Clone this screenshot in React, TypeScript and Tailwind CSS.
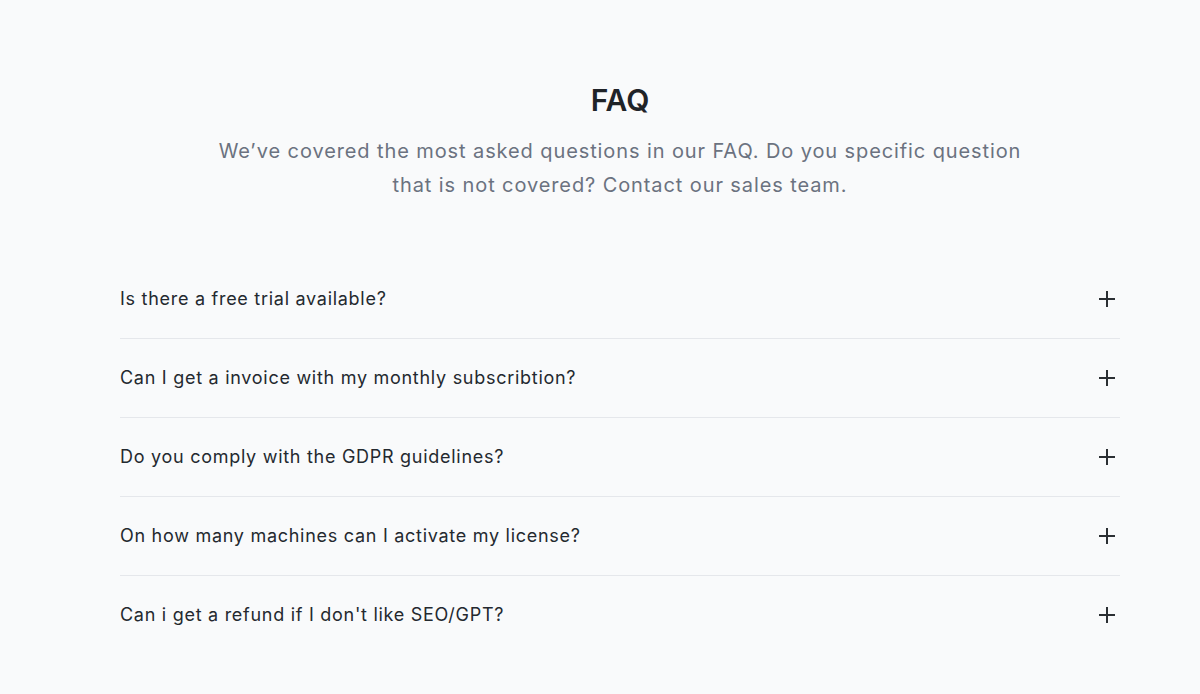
const faqs = [
  'Is there a free trial available?',
  'Can I get a invoice with my monthly subscribtion?',
  'Do you comply with the GDPR guidelines?',
  'On how many machines can I activate my license?',
  "Can i get a refund if I don't like SEO/GPT?",
]

function PlusIcon() {
  return (
    <svg width="18" height="18" viewBox="0 0 18 18" fill="none" stroke="currentColor" strokeWidth="2" strokeLinecap="butt">
      <path d="M9 1v16M1 9h16" />
    </svg>
  )
}

export default function App() {
  return (
    <div className="min-h-[694px] bg-[#f9fafb] font-['Inter',sans-serif]">
      <section className="ml-[120px] w-[1000px] pt-[82px]">
        <h2 className="text-center text-[30px] leading-9 font-semibold text-[#1f2328]">FAQ</h2>
        <p className="mx-auto mt-4 max-w-[820px] text-center text-xl leading-[34px] tracking-[0.045em] text-[#6b7280]">
          We’ve covered the most asked questions in our FAQ. Do you specific question that is not covered? Contact our
          sales team.
        </p>

        <div className="mt-[58px]">
          {faqs.map((q, i) => (
            <div
              key={q}
              className={
                'flex items-center justify-between py-[25px] ' + (i < faqs.length - 1 ? 'border-b border-[#e5e7eb]' : '')
              }
            >
              <span className="text-lg leading-7 tracking-[0.04em] text-[#24292f]">{q}</span>
              <span className="mr-[4px] text-[#2b2f33]">
                <PlusIcon />
              </span>
            </div>
          ))}
        </div>
      </section>
    </div>
  )
}
